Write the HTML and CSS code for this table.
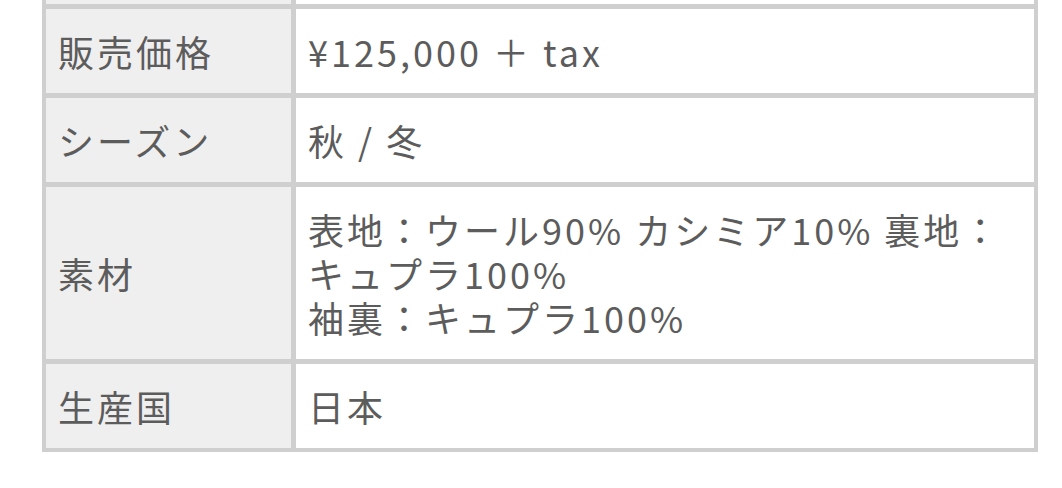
FILE: index.html
```
<!DOCTYPE html>
<html lang="ja">
<head>
<meta charset="utf-8">
<link rel="stylesheet" href="styles.css">
</head>
<body>
<div class="spec">
  <div class="label">&nbsp;</div>
  <div class="value">&nbsp;</div>
  <div class="label">販売価格</div>
  <div class="value">¥125,000 ＋ tax</div>
  <div class="label">シーズン</div>
  <div class="value">秋 / 冬</div>
  <div class="label">素材</div>
  <div class="value">表地：ウール90% カシミア10% 裏地：キュプラ100%<br>袖裏：キュプラ100%</div>
  <div class="label">生産国</div>
  <div class="value">日本</div>
</div>
</body>
</html>
```
FILE: styles.css
```
html, body {
  margin: 0;
  padding: 0;
  background: #ffffff;
}
body {
  font-family: "Noto Sans CJK JP", "Noto Sans", sans-serif;
  color: #5c5c5c;
  overflow: hidden;
}
.spec {
  display: grid;
  grid-template-columns: 245px 738px;
  gap: 5px;
  padding: 4px;
  background: #cfcfcf;
  width: max-content;
  margin: -84px 0 0 42px;
}
.label, .value {
  display: flex;
  align-items: center;
  padding: 20px 16px 20px 12px;
  font-size: 36px;
  line-height: 44px;
  letter-spacing: 3px;
}
.label {
  background: #efefef;
}
.value {
  background: #ffffff;
  display: block;
}
```
